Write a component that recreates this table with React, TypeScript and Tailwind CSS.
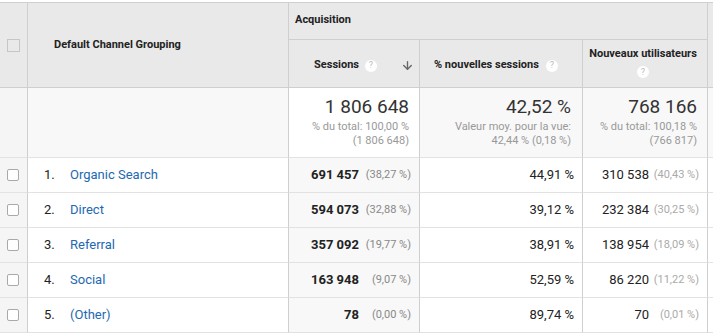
import { ArrowDown } from "lucide-react";

const rows = [
  { n: 1, name: "Organic Search", sessions: "691 457", sPct: "(38,27 %)", newPct: "44,91 %", users: "310 538", uPct: "(40,43 %)" },
  { n: 2, name: "Direct", sessions: "594 073", sPct: "(32,88 %)", newPct: "39,12 %", users: "232 384", uPct: "(30,25 %)" },
  { n: 3, name: "Referral", sessions: "357 092", sPct: "(19,77 %)", newPct: "38,91 %", users: "138 954", uPct: "(18,09 %)" },
  { n: 4, name: "Social", sessions: "163 948", sPct: "(9,07 %)", newPct: "52,59 %", users: "86 220", uPct: "(11,22 %)" },
  { n: 5, name: "(Other)", sessions: "78", sPct: "(0,00 %)", newPct: "89,74 %", users: "70", uPct: "(0,01 %)" },
];

function Help() {
  return (
    <span className="inline-flex w-[12px] h-[12px] rounded-full bg-white items-center justify-center text-[9px] font-normal text-[#bdbdbd] leading-none">
      ?
    </span>
  );
}

export default function App() {
  return (
    <div
      className="w-[713px] h-[334px] bg-white pt-[2px] overflow-hidden text-[#222]"
      style={{ fontFamily: "Roboto, 'Liberation Sans', sans-serif" }}
    >
      <div className="grid grid-cols-[28px_261px_131px_163px_125px_1fr] grid-rows-[37px_48px_70px_35px_35px_35px_35px_35px] border-t border-[#cfcfcf]">
        {/* header */}
        <div className="row-span-2 bg-[#e9e9e9] border-r border-b border-[#cfcfcf] flex items-center pl-[7px]">
          <span className="w-[13px] h-[13px] border border-[#c6c6c6]" />
        </div>
        <div className="row-span-2 bg-[#e9e9e9] border-r border-b border-[#cfcfcf] flex items-center pl-[26px] text-[11px] font-bold">
          Default Channel Grouping
        </div>
        <div className="col-span-3 bg-[#e9e9e9] border-r border-b border-[#cfcfcf] flex items-center pl-[6px] pb-[2px] text-[11px] font-bold">
          Acquisition
        </div>
        <div className="row-span-2 bg-[#e9e9e9] border-b border-[#cfcfcf]" />
        <div className="bg-[#e9e9e9] border-r border-b border-[#cfcfcf] flex items-center justify-end pr-[5px] pt-[4px] text-[11px] font-bold">
          <span>Sessions</span>
          <span className="ml-[6px]">
            <Help />
          </span>
          <ArrowDown className="ml-[24px] w-[13px] h-[13px] text-[#666]" strokeWidth={2.5} />
        </div>
        <div className="bg-[#e9e9e9] border-r border-b border-[#cfcfcf] flex items-center pl-[14px] pt-[4px] text-[11px] font-bold">
          <span>% nouvelles sessions</span>
          <span className="ml-[7px]">
            <Help />
          </span>
        </div>
        <div className="bg-[#e9e9e9] border-r border-b border-[#cfcfcf] flex flex-col items-center justify-center pr-[4px] text-[11px] font-bold">
          <span className="leading-[14px]">Nouveaux utilisateurs</span>
          <span className="mt-[3px]">
            <Help />
          </span>
        </div>

        {/* totals */}
        <div className="bg-[#f5f5f5] border-r border-b border-[#cfcfcf] border-b-[#e2e2e2]" />
        <div className="bg-[#f8f8f8] border-r border-b border-[#cfcfcf] border-b-[#e2e2e2]" />
        <div className="bg-white border-r border-b border-[#cfcfcf] border-b-[#e2e2e2] flex flex-col items-end justify-center pr-[10px] pb-[2px]">
          <span className="text-[19px] leading-[22px] text-[#333]">1 806 648</span>
          <span className="text-[11px] leading-[14px] text-[#999] mt-[2px]">% du total: 100,00 %</span>
          <span className="text-[11px] leading-[14px] text-[#999]">(1 806 648)</span>
        </div>
        <div className="bg-[#f8f8f8] border-r border-b border-[#cfcfcf] border-b-[#e2e2e2] flex flex-col items-end justify-center pr-[11px] pb-[2px]">
          <span className="text-[19px] leading-[22px] text-[#333]">42,52 %</span>
          <span className="text-[11px] leading-[14px] text-[#999] mt-[2px]">Valeur moy. pour la vue:</span>
          <span className="text-[11px] leading-[14px] text-[#999]">42,44 % (0,18 %)</span>
        </div>
        <div className="bg-[#f8f8f8] border-r border-b border-[#cfcfcf] border-b-[#e2e2e2] flex flex-col items-end justify-center pr-[10px] pb-[2px]">
          <span className="text-[19px] leading-[22px] text-[#333]">768 166</span>
          <span className="text-[11px] leading-[14px] text-[#999] mt-[2px]">% du total: 100,18 %</span>
          <span className="text-[11px] leading-[14px] text-[#999]">(766 817)</span>
        </div>
        <div className="bg-[#f8f8f8] border-b border-[#e2e2e2]" />

        {/* data rows */}
        {rows.map((r) => (
          <div key={r.n} className="contents">
            <div className="bg-[#f5f5f5] border-r border-b border-[#cfcfcf] border-b-[#e2e2e2] flex items-center pl-[7px]">
              <span className="w-[12px] h-[12px] rounded-[2px] border border-[#a9a9a9] bg-white" />
            </div>
            <div className="bg-white border-r border-b border-[#cfcfcf] border-b-[#e2e2e2] flex items-center text-[13px]">
              <span className="w-[42px] pl-[16px] text-[#222]">{r.n}.</span>
              <span className="text-[#2369b1]">{r.name}</span>
            </div>
            <div className="bg-[#f8f8f8] border-r border-b border-[#cfcfcf] border-b-[#e2e2e2] flex items-center justify-end pr-[8px]">
              <span className="text-[13px] font-bold text-[#222]">{r.sessions}</span>
              <span className="w-[52px] text-right text-[11px] text-[#888]">{r.sPct}</span>
            </div>
            <div className="bg-white border-r border-b border-[#cfcfcf] border-b-[#e2e2e2] flex items-center justify-end pr-[8px] text-[13px] text-[#222]">
              {r.newPct}
            </div>
            <div className="bg-white border-r border-b border-[#cfcfcf] border-b-[#e2e2e2] flex items-center justify-end pr-[8px]">
              <span className="text-[13px] text-[#222]">{r.users}</span>
              <span className="w-[50px] text-right text-[11px] text-[#aaa]">{r.uPct}</span>
            </div>
            <div className="bg-white border-b border-[#e2e2e2]" />
          </div>
        ))}
      </div>
    </div>
  );
}
